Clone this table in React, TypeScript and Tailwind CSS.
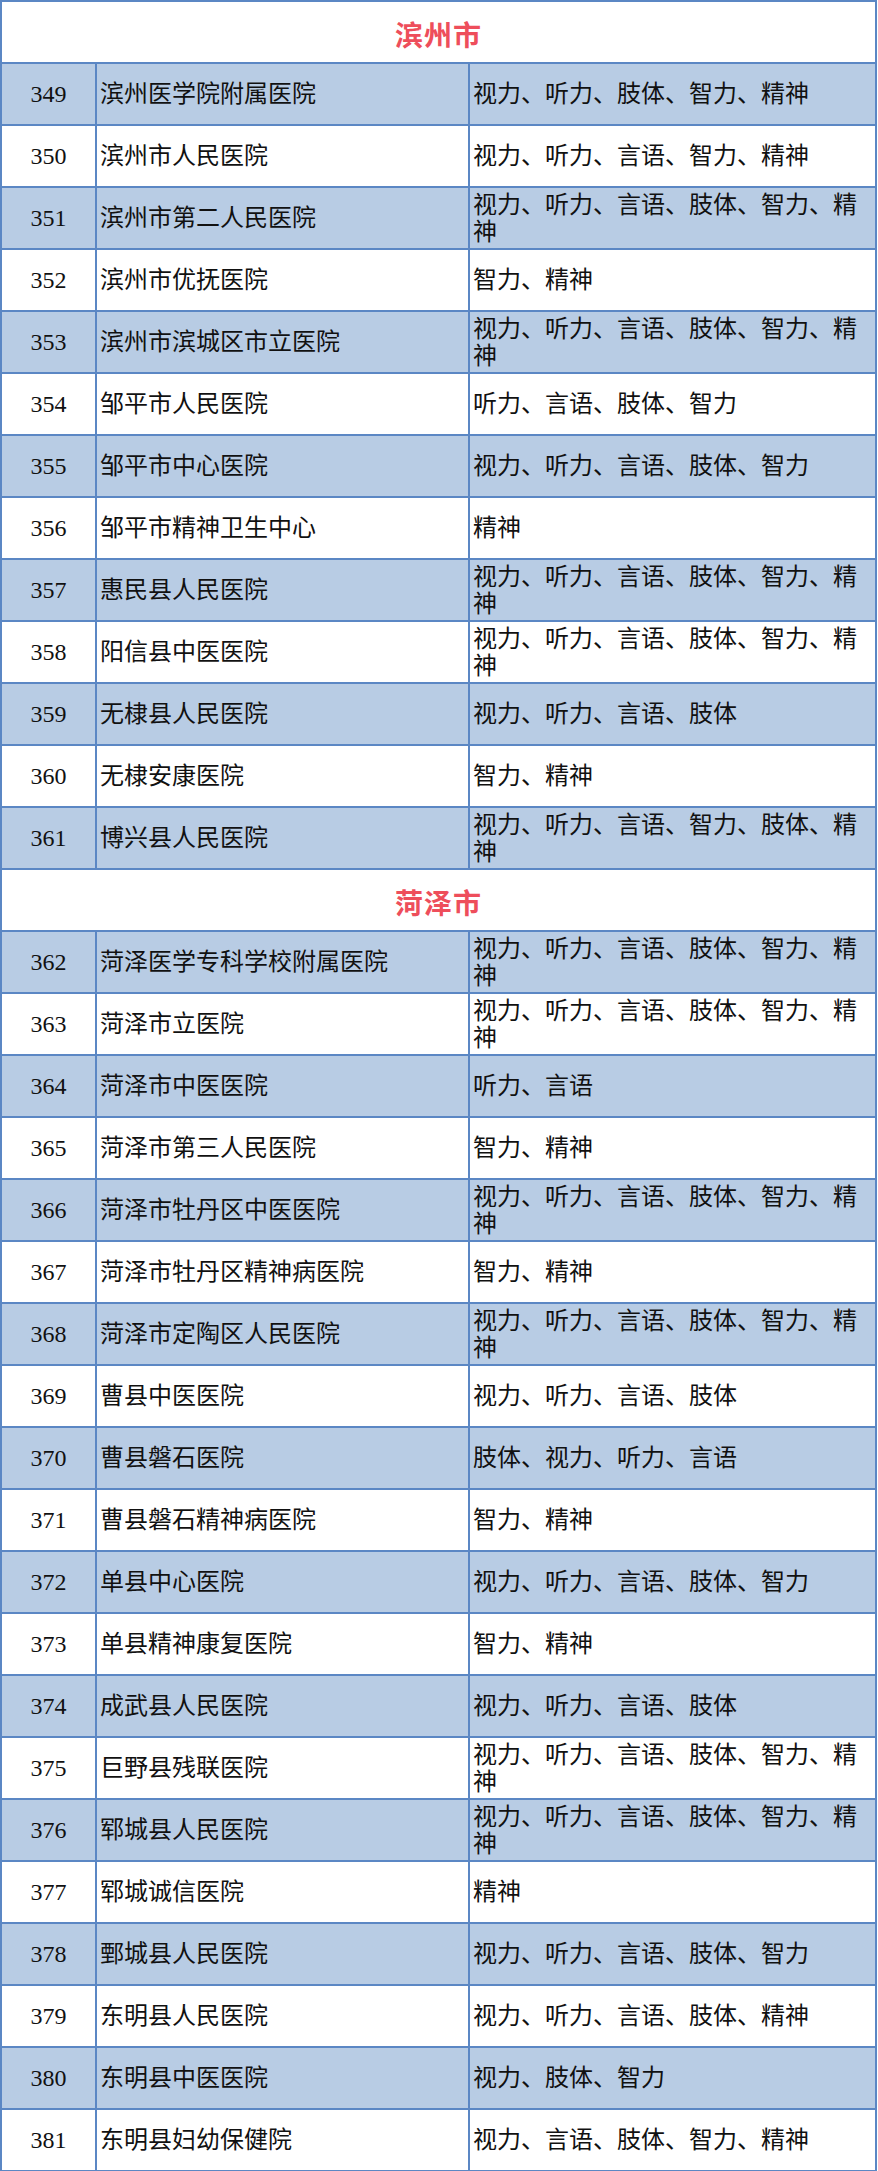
type Row = { no: number; name: string; types: string };

type Section = { city: string; rows: Row[] };

const sections: Section[] = [
      {
            city: "滨州市",
            rows: [
                  { no: 349, name: "滨州医学院附属医院", types: "视力、听力、肢体、智力、精神" },
                  { no: 350, name: "滨州市人民医院", types: "视力、听力、言语、智力、精神" },
                  { no: 351, name: "滨州市第二人民医院", types: "视力、听力、言语、肢体、智力、精神" },
                  { no: 352, name: "滨州市优抚医院", types: "智力、精神" },
                  { no: 353, name: "滨州市滨城区市立医院", types: "视力、听力、言语、肢体、智力、精神" },
                  { no: 354, name: "邹平市人民医院", types: "听力、言语、肢体、智力" },
                  { no: 355, name: "邹平市中心医院", types: "视力、听力、言语、肢体、智力" },
                  { no: 356, name: "邹平市精神卫生中心", types: "精神" },
                  { no: 357, name: "惠民县人民医院", types: "视力、听力、言语、肢体、智力、精神" },
                  { no: 358, name: "阳信县中医医院", types: "视力、听力、言语、肢体、智力、精神" },
                  { no: 359, name: "无棣县人民医院", types: "视力、听力、言语、肢体" },
                  { no: 360, name: "无棣安康医院", types: "智力、精神" },
                  { no: 361, name: "博兴县人民医院", types: "视力、听力、言语、智力、肢体、精神" },
            ],
      },
      {
            city: "菏泽市",
            rows: [
                  { no: 362, name: "菏泽医学专科学校附属医院", types: "视力、听力、言语、肢体、智力、精神" },
                  { no: 363, name: "菏泽市立医院", types: "视力、听力、言语、肢体、智力、精神" },
                  { no: 364, name: "菏泽市中医医院", types: "听力、言语" },
                  { no: 365, name: "菏泽市第三人民医院", types: "智力、精神" },
                  { no: 366, name: "菏泽市牡丹区中医医院", types: "视力、听力、言语、肢体、智力、精神" },
                  { no: 367, name: "菏泽市牡丹区精神病医院", types: "智力、精神" },
                  { no: 368, name: "菏泽市定陶区人民医院", types: "视力、听力、言语、肢体、智力、精神" },
                  { no: 369, name: "曹县中医医院", types: "视力、听力、言语、肢体" },
                  { no: 370, name: "曹县磐石医院", types: "肢体、视力、听力、言语" },
                  { no: 371, name: "曹县磐石精神病医院", types: "智力、精神" },
                  { no: 372, name: "单县中心医院", types: "视力、听力、言语、肢体、智力" },
                  { no: 373, name: "单县精神康复医院", types: "智力、精神" },
                  { no: 374, name: "成武县人民医院", types: "视力、听力、言语、肢体" },
                  { no: 375, name: "巨野县残联医院", types: "视力、听力、言语、肢体、智力、精神" },
                  { no: 376, name: "郓城县人民医院", types: "视力、听力、言语、肢体、智力、精神" },
                  { no: 377, name: "郓城诚信医院", types: "精神" },
                  { no: 378, name: "鄄城县人民医院", types: "视力、听力、言语、肢体、智力" },
                  { no: 379, name: "东明县人民医院", types: "视力、听力、言语、肢体、精神" },
                  { no: 380, name: "东明县中医医院", types: "视力、肢体、智力" },
                  { no: 381, name: "东明县妇幼保健院", types: "视力、言语、肢体、智力、精神" },
            ],
      },
];

const cellFont = "font-['Liberation_Serif','Noto_Sans_CJK_SC',serif] text-[24px] leading-[27px] text-[#111]";

const App = () => {
      return (
            <div className="w-[878px] bg-white">
                  <div className="w-[877px] border-2 border-b-0 border-[#5b87c4]">
                        {sections.map((section) => (
                              <div key={section.city}>
                                    {/* City header */}
                                    <div className="h-[62px] border-b-2 border-[#5b87c4] flex items-center justify-center pt-1">
                                          <span className="font-['Noto_Sans_CJK_SC',sans-serif] font-bold text-[28px] tracking-[1px] text-[#ee4e5b]">{section.city}</span>
                                    </div>

                                    {section.rows.map((row, i) => (
                                          <div key={row.no} className={`flex h-[62px] border-b-2 border-[#5b87c4] ${i % 2 === 0 ? "bg-[#b8cce4]" : "bg-white"}`}>
                                                <div className={`w-[95px] shrink-0 border-r-2 border-[#5b87c4] flex items-center justify-center ${cellFont}`}>{row.no}</div>
                                                <div className={`w-[373px] shrink-0 border-r-2 border-[#5b87c4] flex items-center pl-[3px] ${cellFont}`}>{row.name}</div>
                                                <div className={`flex-1 flex items-center pl-[3px] pt-[1px] ${cellFont}`}>
                                                      <p>{row.types}</p>
                                                </div>
                                          </div>
                                    ))}
                              </div>
                        ))}
                  </div>
            </div>
      );
};

export default App;
